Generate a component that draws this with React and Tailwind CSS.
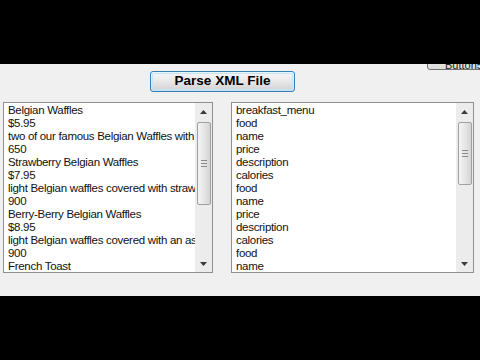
import React from 'react';

const leftItems = [
  'Belgian Waffles',
  '$5.95',
  'two of our famous Belgian Waffles with plenty of real maple syrup',
  '650',
  'Strawberry Belgian Waffles',
  '$7.95',
  'light Belgian waffles covered with strawberries and whipped cream',
  '900',
  'Berry-Berry Belgian Waffles',
  '$8.95',
  'light Belgian waffles covered with an assortment of fresh berries and whipped cream',
  '900',
  'French Toast',
];

const rightItems = [
  'breakfast_menu',
  'food',
  'name',
  'price',
  'description',
  'calories',
  'food',
  'name',
  'price',
  'description',
  'calories',
  'food',
  'name',
];

const ScrollBar = ({ thumb }) => (
  <div className="w-[17px] h-full bg-[#ececec] flex flex-col items-center shrink-0">
    <div className="h-[17px] w-full flex items-center justify-center">
      <svg width="7" height="4" viewBox="0 0 7 4">
        <path d="M3.5 0 L7 4 L0 4 Z" fill="#3a3a3a" />
      </svg>
    </div>
    <div className="flex-1 w-full flex flex-col items-center pt-[2px]">
      <div
        className="w-[14px] rounded-[2px] border border-[#a0a0a0] bg-gradient-to-r from-[#f4f4f4] via-[#e6e6e6] to-[#d4d4d4] flex flex-col items-center justify-center gap-[2px]"
        style={{ height: thumb }}
      >
        <div className="w-[6px] h-px bg-[#8a8a8a]" />
        <div className="w-[6px] h-px bg-[#8a8a8a]" />
        <div className="w-[6px] h-px bg-[#8a8a8a]" />
      </div>
    </div>
    <div className="h-[17px] w-full flex items-center justify-center">
      <svg width="7" height="4" viewBox="0 0 7 4">
        <path d="M0 0 L7 0 L3.5 4 Z" fill="#3a3a3a" />
      </svg>
    </div>
  </div>
);

const ListBox = ({ items, width, thumb }) => (
  <div
    className="h-[171px] border border-[#8e8f8f] bg-white flex shrink-0"
    style={{ width }}
  >
    <div className="flex-1 overflow-hidden pl-[4px] pt-[1px] text-[11.5px] leading-[13px] tracking-[-0.3px] text-[#111]">
      {items.map((t, i) => (
        <div key={i} className="whitespace-nowrap">{t}</div>
      ))}
    </div>
    <ScrollBar thumb={thumb} />
  </div>
);

export default function App() {
  return (
    <div
      className="w-[480px] h-[360px] bg-black flex flex-col"
      style={{ fontFamily: '"Liberation Sans", Arial, sans-serif' }}
    >
      <div className="h-[64px] bg-black shrink-0" />
      <div className="h-[232px] bg-[#f0f0f0] relative overflow-hidden shrink-0">
        <div className="absolute left-[427px] top-[-16px] w-[80px] h-[22px] rounded-[3px] border border-[#707070] bg-gradient-to-b from-[#f2f2f2] to-[#dcdcdc] pl-[17px] pt-[8px] text-[11px] text-[#222]">
          Button5
        </div>
        <div className="pt-[7px] pl-[150px]">
          <div className="w-[145px] h-[21px] rounded-[3px] border border-[#3c7fb1] bg-gradient-to-b from-[#eaf6fd] via-[#dcecf8] to-[#c4dff2] p-px">
            <div className="w-full h-full rounded-[2px] border border-[#c6e4f7] bg-gradient-to-b from-[#f4f4f4] via-[#e8e8e8] to-[#d6d6d6] flex items-center justify-center text-[13.5px] font-bold text-black">
              Parse XML File
            </div>
          </div>
        </div>
        <div className="flex pt-[10px] pl-[3px] gap-[18px]">
          <ListBox items={leftItems} width={210} thumb={83} />
          <ListBox items={rightItems} width={243} thumb={63} />
        </div>
      </div>
      <div className="flex-1 bg-black" />
    </div>
  );
}
